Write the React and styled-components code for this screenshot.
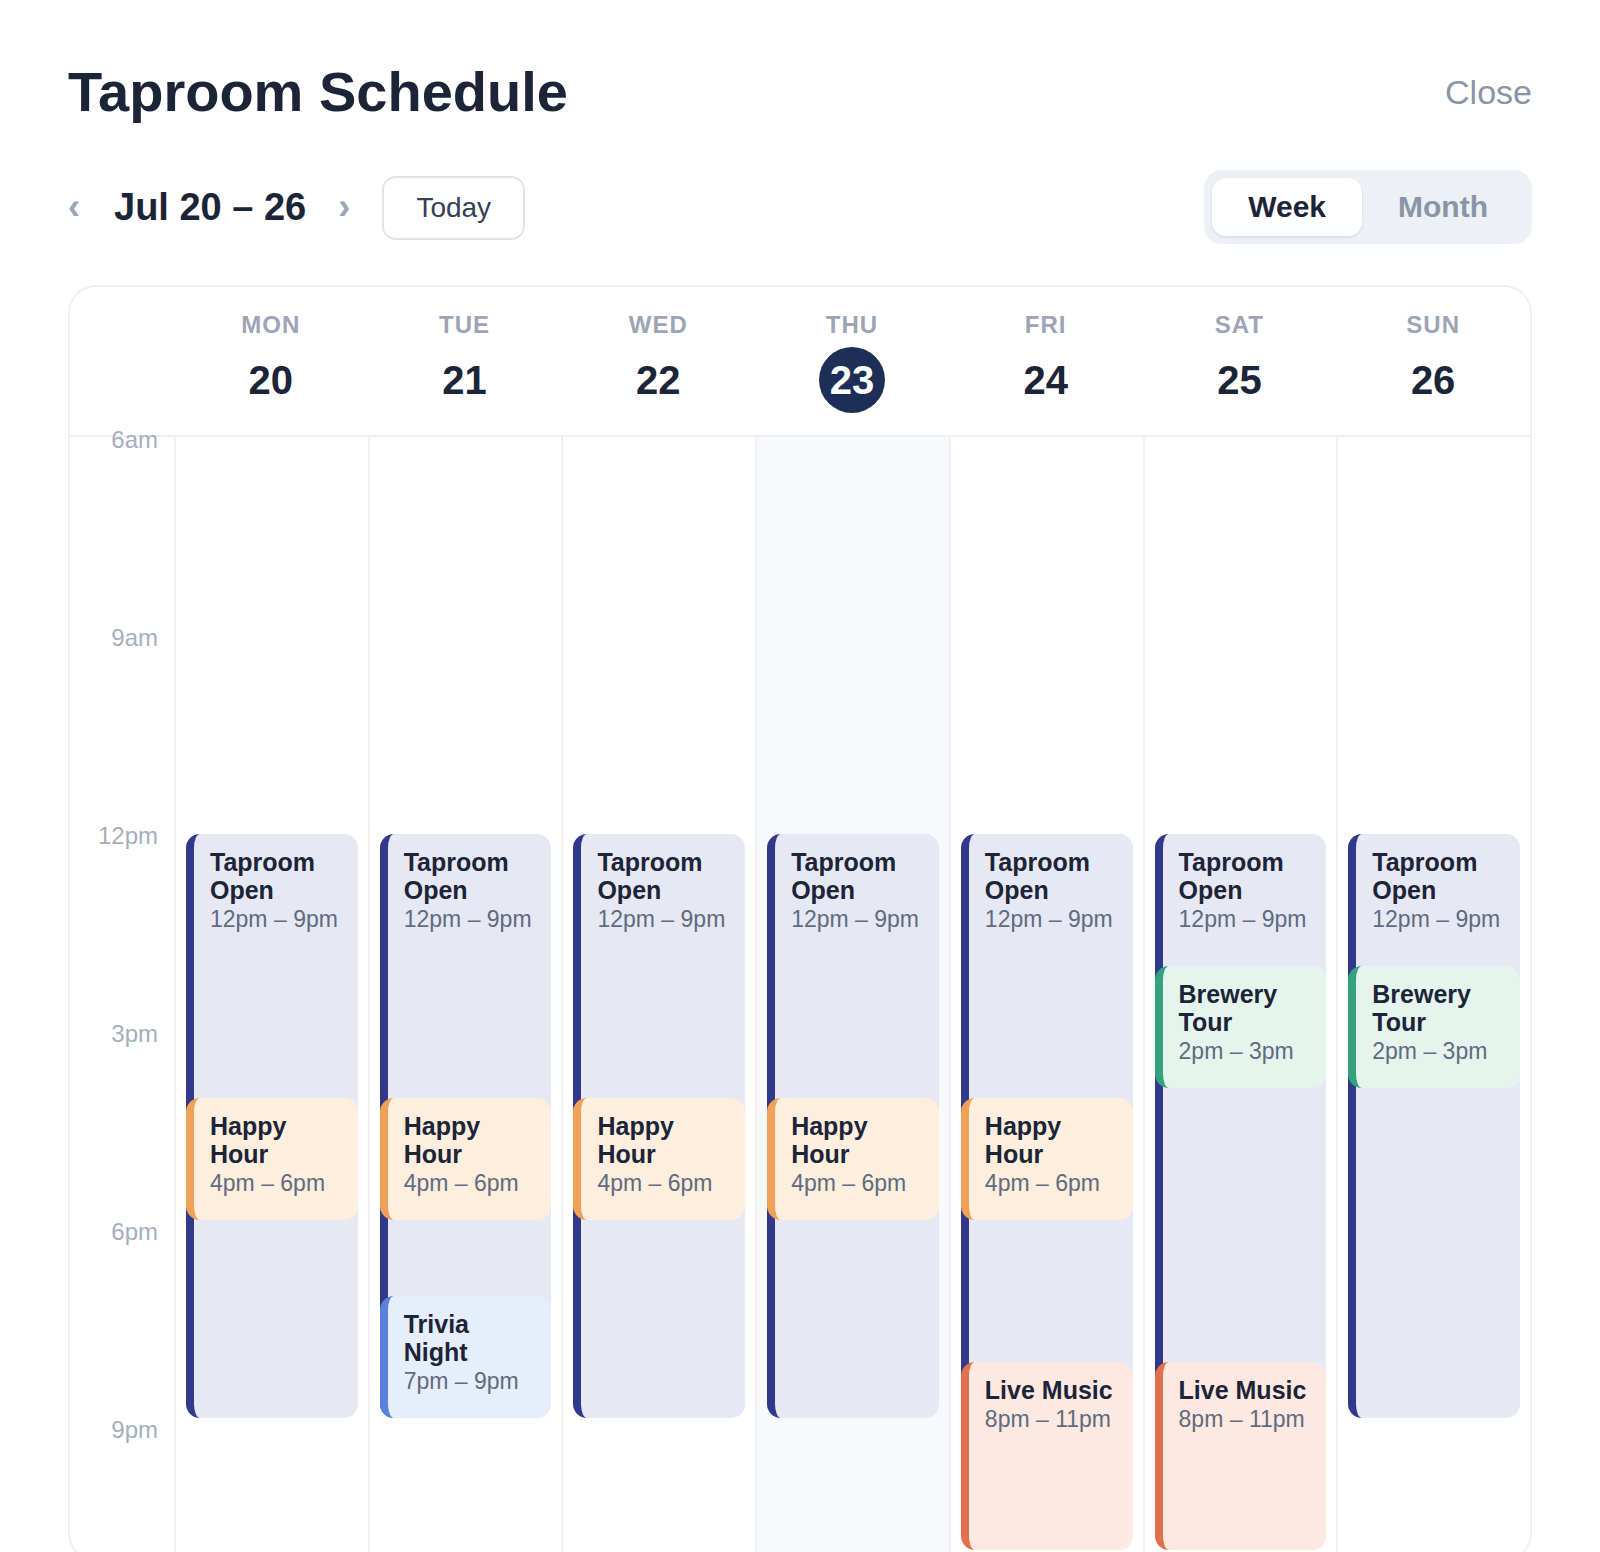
import React from "react";
import styled, { createGlobalStyle } from "styled-components";

const HOUR = 66;
const START = 6;
const END = 23;

const GlobalStyle = createGlobalStyle`
  html, body { margin: 0; padding: 0; background: #ffffff; }
  body { font-family: "Liberation Sans", Arial, sans-serif; color: #1c2438; }
  * { box-sizing: border-box; }
`;

const Page = styled.div`
  padding: 58px 68px 0 68px;
`;

const TitleRow = styled.div`
  display: flex;
  align-items: center;
  justify-content: space-between;
  height: 67px;
`;

const Title = styled.h1`
  margin: 0;
  font-size: 56px;
  line-height: 67px;
  font-weight: 700;
  color: #1c2438;
`;

const CloseButton = styled.button`
  border: none;
  background: none;
  padding: 0;
  margin-top: 2px;
  font-family: inherit;
  font-size: 34px;
  color: #8a94a7;
  cursor: pointer;
`;

const NavRow = styled.div`
  margin-top: 45px;
  height: 74px;
  display: flex;
  align-items: center;
  justify-content: space-between;
`;

const NavLeft = styled.div`
  display: flex;
  align-items: center;
`;

const Chevron = styled.button`
  border: none;
  background: none;
  padding: 0;
  font-family: inherit;
  font-size: 36px;
  font-weight: 700;
  color: #9ca4b5;
  line-height: 1;
  margin: ${(p) => p.$margin};
  cursor: pointer;
`;

const RangeLabel = styled.div`
  font-size: 38px;
  font-weight: 700;
  color: #1c2438;
`;

const TodayButton = styled.button`
  margin-left: 32px;
  margin-top: 2px;
  width: 143px;
  height: 64px;
  border: 2px solid #dfe4ec;
  border-radius: 14px;
  background: #fff;
  font-family: inherit;
  font-size: 28px;
  color: #334155;
  cursor: pointer;
`;

const Segmented = styled.div`
  display: flex;
  padding: 8px;
  background: #edf0f5;
  border-radius: 18px;
`;

const Segment = styled.button`
  height: 58px;
  padding: 0 36px;
  border: none;
  border-radius: 14px;
  font-family: inherit;
  font-size: 30px;
  font-weight: 700;
  cursor: pointer;
  background: ${(p) => (p.$active ? "#ffffff" : "transparent")};
  color: ${(p) => (p.$active ? "#1c2438" : "#8a94a7")};
  box-shadow: ${(p) => (p.$active ? "0 1px 3px rgba(15, 23, 42, 0.12)" : "none")};
`;

const Card = styled.div`
  margin-top: 41px;
  border: 2px solid #edf0f4;
  border-radius: 28px;
  overflow: hidden;
  background: #fff;
`;

const HeaderGrid = styled.div`
  display: grid;
  grid-template-columns: 104px repeat(7, 1fr);
  border-bottom: 2px solid #edf0f4;
  padding: 24px 0 22px;
`;

const DayHead = styled.div`
  display: flex;
  flex-direction: column;
  align-items: center;
`;

const DayName = styled.div`
  font-size: 24px;
  line-height: 28px;
  font-weight: 700;
  letter-spacing: 1px;
  color: #9ca4b5;
`;

const DayNum = styled.div`
  margin-top: 8px;
  width: 66px;
  height: 66px;
  border-radius: 50%;
  display: flex;
  align-items: center;
  justify-content: center;
  font-size: 40px;
  font-weight: 700;
  color: ${(p) => (p.$today ? "#ffffff" : "#1c2438")};
  background: ${(p) => (p.$today ? "#1e2f57" : "transparent")};
`;

const Body = styled.div`
  display: grid;
  grid-template-columns: 104px repeat(7, 1fr);
  height: ${(END - START) * HOUR}px;
`;

const Gutter = styled.div`
  position: relative;
`;

const TimeLabel = styled.div`
  position: absolute;
  right: 16px;
  font-size: 24px;
  line-height: 28px;
  color: #a6aebd;
  z-index: 2;
`;

const DayColumn = styled.div`
  position: relative;
  border-left: 2px solid #eef0f4;
  background: ${(p) => (p.$today ? "#f8f9fb" : "#ffffff")};
`;

const Event = styled.div`
  position: absolute;
  left: 10px;
  right: 10px;
  border-radius: 14px;
  border-left: 8px solid ${(p) => p.$bar};
  background: ${(p) => p.$bg};
  padding: 14px 16px 22px 16px;
  overflow: hidden;
`;

const EventTitle = styled.div`
  font-size: 25px;
  line-height: 28px;
  font-weight: 700;
  color: #1c2438;
`;

const EventTime = styled.div`
  margin-top: 1px;
  font-size: 23px;
  line-height: 29px;
  color: #5f6b7f;
  white-space: nowrap;
`;

const KINDS = {
  taproom: { title: "Taproom Open", bar: "#30398c", bg: "#e6e8f4" },
  happy: { title: "Happy Hour", bar: "#f0a158", bg: "#fdeedd" },
  brewery: { title: "Brewery Tour", bar: "#35a27d", bg: "#e5f5ed" },
  trivia: { title: "Trivia Night", bar: "#5b80de", bg: "#e6edfb" },
  live: { title: "Live Music", bar: "#e1704c", bg: "#fde9e1" },
};

const fmt = (h) => {
  const hh = h % 12 === 0 ? 12 : h % 12;
  return `${hh}${h >= 12 ? "pm" : "am"}`;
};

const ev = (kind, start, end) => ({ kind, start, end });

const DAYS = [
  { name: "MON", num: 20, events: [ev("taproom", 12, 21), ev("happy", 16, 18)] },
  { name: "TUE", num: 21, events: [ev("taproom", 12, 21), ev("happy", 16, 18), ev("trivia", 19, 21)] },
  { name: "WED", num: 22, events: [ev("taproom", 12, 21), ev("happy", 16, 18)] },
  { name: "THU", num: 23, today: true, events: [ev("taproom", 12, 21), ev("happy", 16, 18)] },
  { name: "FRI", num: 24, events: [ev("taproom", 12, 21), ev("happy", 16, 18), ev("live", 20, 23)] },
  { name: "SAT", num: 25, events: [ev("taproom", 12, 21), ev("brewery", 14, 15), ev("live", 20, 23)] },
  { name: "SUN", num: 26, events: [ev("taproom", 12, 21), ev("brewery", 14, 15)] },
];

const LABELS = [6, 9, 12, 15, 18, 21];

export default function App() {
  return (
    <>
      <GlobalStyle />
      <Page>
        <TitleRow>
          <Title>Taproom Schedule</Title>
          <CloseButton>Close</CloseButton>
        </TitleRow>

        <NavRow>
          <NavLeft>
            <Chevron $margin="0 34px 0 0">‹</Chevron>
            <RangeLabel>Jul 20 – 26</RangeLabel>
            <Chevron $margin="0 0 0 32px">›</Chevron>
            <TodayButton>Today</TodayButton>
          </NavLeft>
          <Segmented>
            <Segment $active>Week</Segment>
            <Segment>Month</Segment>
          </Segmented>
        </NavRow>

        <Card>
          <HeaderGrid>
            <div />
            {DAYS.map((d) => (
              <DayHead key={d.name}>
                <DayName>{d.name}</DayName>
                <DayNum $today={d.today}>{d.num}</DayNum>
              </DayHead>
            ))}
          </HeaderGrid>
          <Body>
            <Gutter>
              {LABELS.map((h) => (
                <TimeLabel key={h} style={{ top: (h - START) * HOUR - 11 }}>
                  {fmt(h)}
                </TimeLabel>
              ))}
            </Gutter>
            {DAYS.map((d) => (
              <DayColumn key={d.name} $today={d.today}>
                {d.events.map((e, i) => {
                  const k = KINDS[e.kind];
                  return (
                    <Event
                      key={i}
                      $bar={k.bar}
                      $bg={k.bg}
                      style={{
                        top: (e.start - START) * HOUR + 1,
                        minHeight: (e.end - e.start) * HOUR - 10,
                      }}
                    >
                      <EventTitle>{k.title}</EventTitle>
                      <EventTime>
                        {fmt(e.start)} – {fmt(e.end)}
                      </EventTime>
                    </Event>
                  );
                })}
              </DayColumn>
            ))}
          </Body>
        </Card>
      </Page>
    </>
  );
}
